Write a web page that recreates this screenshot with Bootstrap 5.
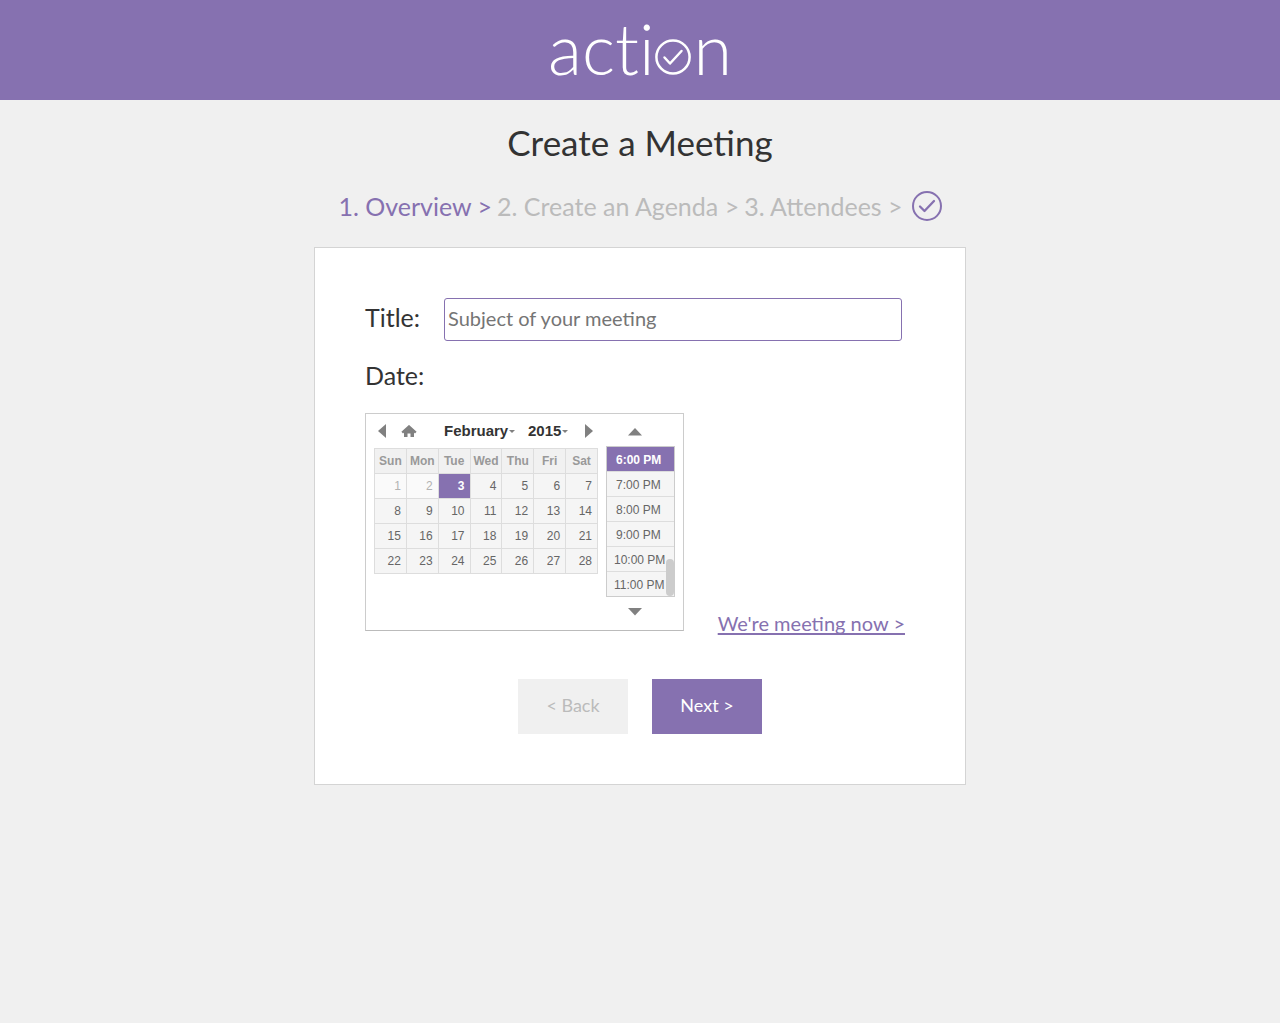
<!DOCTYPE html>
<html lang="en">
<head>
<meta charset="utf-8">
<meta name="viewport" content="width=device-width, initial-scale=1">
<title>Action - Create a Meeting</title>
<link href="https://cdn.jsdelivr.net/npm/bootstrap@5.3.0/dist/css/bootstrap.min.css" rel="stylesheet">
<style>
:root { --brand: #8671b0; --muted: #bbb; --line: #ddd; }
body { background: #f0f0f0; color: #333; font-family: Lato, sans-serif; font-size: 20px; line-height: 28px; }
button, input, select { font-family: inherit; }
.masthead { background: var(--brand); height: 100px; padding-bottom: 4px; }
.logo { color: #fff; font-size: 70px; font-weight: 300; line-height: 84px; font-variant-ligatures: none; }
.o-mark { margin: 18px 2px 0 1px; }
.page-title { font-size: 35px; line-height: 44px; font-weight: 400; margin: 20px 0 26px; }
.steps { font-size: 25px; line-height: 32px; gap: 5px; margin-bottom: 25px; }
.steps a { color: var(--muted); text-decoration: none; }
.steps a.current { color: var(--brand); }
.panel { max-width: 652px; background: #fff; border: 1px solid #d4d4d4; padding: 50px; }
.field-name { font-size: 25px; line-height: 32px; }
.title-row { gap: 24px; padding-right: 13px; }
.title-row label { padding-bottom: 6px; }
.title-input { height: 43px; border: 1px solid var(--brand); border-radius: 3px; padding: 0 3px 3px; font-size: 20px; }
.title-input::placeholder { color: #757575; opacity: 1; }
.date-name { margin: 18px 0 22px; }
.picker { border: 1px solid #ccc; border-bottom-color: #bbb; width: 319px; height: 218px; padding: 0 8px; margin-bottom: 6px; font-family: "Liberation Sans", Arial, sans-serif; font-size: 12px; line-height: 24px; gap: 8px; }
.month-side { width: 224px; }
.month-bar { height: 34px; padding: 0 4px; }
.plain { border: 0; padding: 0; background: none; color: inherit; }
.pick-select { border: 0; padding: 0; background: none; appearance: none; font-size: 15px; font-weight: 700; color: #333; height: 24px; }
.home-btn { margin: 0 27px 0 15px; }
.month-select { width: 65px; }
.year-select { width: 34px; margin-left: 13px; }
.next-month { margin-left: 17px; }
.days { width: 224px; table-layout: fixed; border-collapse: collapse; }
.days th, .days td { border: 1px solid var(--line); height: 25px; padding: 0; }
.days th { background: #f1f1f1; color: #999; font-weight: 700; text-align: center; }
.days td { background: #f5f5f5; color: #666; }
.days td.past { color: #b2b2b2; background: #fafafa; }
.days td.chosen { background: var(--brand); color: #fff; font-weight: 700; }
.days button { width: 100%; text-align: right; padding-right: 5px; font-weight: inherit; display: block; }
.time-side { width: 69px; }
.times { border: 1px solid #ccc; width: 69px; height: 151px; overflow: hidden; }
.times button { height: 25px; width: 100%; display: block; border-bottom: 1px solid var(--line); background: #f5f5f5; color: #666; white-space: nowrap; text-align: left; padding: 1px 0 0 9px; }
.times button.wide { padding-left: 7px; }
.times button.chosen { background: var(--brand); color: #fff; font-weight: 700; }
.thumb { right: 0; bottom: 0; width: 8px; height: 37px; border-radius: 4px; background: #ccc; }
.time-arrow { width: 58px; line-height: 0; }
.earlier { padding: 14px 0 10px; }
.later { padding-top: 11px; }
.now-link { color: var(--brand); margin-right: 10px; text-decoration: underline; text-decoration-thickness: 2px; text-decoration-skip-ink: none; text-underline-offset: 2px; }
.now-link:hover, .steps a:hover { color: #5d4a86; }
.actions { gap: 24px; margin-top: 42px; }
.action-btn { width: 110px; height: 55px; border: 0; border-radius: 0; padding: 0 0 4px; font-size: 18px; }
.back-btn { background: #f0f0f0; color: var(--muted); }
.next-btn, .next-btn:hover { background: var(--brand); color: #fff; }
</style>
</head>
<body>
<header class="masthead d-flex justify-content-center align-items-center">
  <div class="logo d-flex align-items-center">
    <span>acti</span><svg width="36" height="36" viewBox="0 0 36 36" fill="none" stroke="#fff" role="img" aria-label="o" class="o-mark"><circle cx="18" cy="18" r="16.6" stroke-width="2.5"/><path d="M9.500 18.500l5.500 6L26.500 12" stroke-width="2.5" stroke-linecap="round" stroke-linejoin="round"/></svg><span>n</span>
  </div>
</header>
<main class="container-fluid px-3">
  <h1 class="page-title text-center">Create a Meeting</h1>
  <nav class="steps d-flex flex-wrap justify-content-center align-items-center" aria-label="Steps">
    <a class="current" href="#overview" aria-current="step">1. Overview &gt;</a>
    <a href="#agenda">2. Create an Agenda &gt;</a>
    <a href="#attendees">3. Attendees &gt;</a>
    <svg class="ms-1" width="30" height="30" viewBox="0 0 30 30" fill="none" stroke="#8671b0" stroke-width="2"><circle cx="15" cy="15" r="14"/><path d="M8 15.500l4.500 4.500L22 10" stroke-width="2.3" stroke-linecap="round" stroke-linejoin="round"/></svg>
  </nav>
  <form class="panel mx-auto">
    <div class="title-row d-flex align-items-center">
      <label class="field-name" for="title">Title:</label>
      <input class="title-input flex-grow-1 w-100" id="title" type="text" placeholder="Subject of your meeting">
    </div>
    <div class="field-name date-name" id="date-name">Date:</div>
    <div class="d-flex flex-wrap justify-content-between align-items-end">
      <div class="picker d-flex" role="group" aria-labelledby="date-name">
        <div class="month-side">
          <div class="month-bar d-flex align-items-center">
            <button class="plain prev-btn d-flex" type="button" aria-label="Previous month"><svg width="8" height="14"><path d="M8 0v14L0 7z" fill="#808080"/></svg></button>
            <button class="plain home-btn d-flex" type="button" aria-label="Today"><svg width="16" height="12" viewBox="0 0 16 12"><path d="M1.200 7.600L8 1.500l6.800 6.100" fill="none" stroke="#808080" stroke-width="2.400"/><path d="M3 7l5-4.500L13 7v5H9.500V8.500h-3V12H3z" fill="#808080"/></svg></button>
            <select class="pick-select month-select" aria-label="Month"><option>January</option><option selected>February</option><option>March</option><option>April</option></select>
            <svg width="6" height="3"><path d="M0 0h6L3 3z" fill="#808080"/></svg>
            <select class="pick-select year-select" aria-label="Year"><option>2014</option><option selected>2015</option><option>2016</option></select>
            <svg width="6" height="3"><path d="M0 0h6L3 3z" fill="#808080"/></svg>
            <button class="plain next-month d-flex" type="button" aria-label="Next month"><svg width="8" height="14"><path d="M0 0v14l8-7z" fill="#808080"/></svg></button>
          </div>
          <table class="days">
            <thead><tr><th>Sun</th><th>Mon</th><th>Tue</th><th>Wed</th><th>Thu</th><th>Fri</th><th>Sat</th></tr></thead>
            <tbody>
              <tr><td class="past"><button class="plain" type="button">1</button></td><td class="past"><button class="plain" type="button">2</button></td><td class="chosen"><button class="plain" type="button">3</button></td><td><button class="plain" type="button">4</button></td><td><button class="plain" type="button">5</button></td><td><button class="plain" type="button">6</button></td><td><button class="plain" type="button">7</button></td></tr>
              <tr><td><button class="plain" type="button">8</button></td><td><button class="plain" type="button">9</button></td><td><button class="plain" type="button">10</button></td><td><button class="plain" type="button">11</button></td><td><button class="plain" type="button">12</button></td><td><button class="plain" type="button">13</button></td><td><button class="plain" type="button">14</button></td></tr>
              <tr><td><button class="plain" type="button">15</button></td><td><button class="plain" type="button">16</button></td><td><button class="plain" type="button">17</button></td><td><button class="plain" type="button">18</button></td><td><button class="plain" type="button">19</button></td><td><button class="plain" type="button">20</button></td><td><button class="plain" type="button">21</button></td></tr>
              <tr><td><button class="plain" type="button">22</button></td><td><button class="plain" type="button">23</button></td><td><button class="plain" type="button">24</button></td><td><button class="plain" type="button">25</button></td><td><button class="plain" type="button">26</button></td><td><button class="plain" type="button">27</button></td><td><button class="plain" type="button">28</button></td></tr>
            </tbody>
          </table>
        </div>
        <div class="time-side">
          <button class="plain time-arrow earlier d-flex justify-content-center" type="button" aria-label="Earlier"><svg width="14" height="8"><path d="M0 7.500h14L7 0z" fill="#808080"/></svg></button>
          <div class="times position-relative">
            <button class="plain chosen" type="button">6:00 PM</button>
            <button class="plain" type="button">7:00 PM</button>
            <button class="plain" type="button">8:00 PM</button>
            <button class="plain" type="button">9:00 PM</button>
            <button class="plain wide" type="button">10:00 PM</button>
            <button class="plain wide" type="button">11:00 PM</button>
            <div class="thumb position-absolute"></div>
          </div>
          <button class="plain time-arrow later d-flex justify-content-center" type="button" aria-label="Later"><svg width="14" height="8"><path d="M0 0h14L7 7.500z" fill="#808080"/></svg></button>
        </div>
      </div>
      <a class="now-link" href="#now">We're meeting now &gt;</a>
    </div>
    <div class="actions d-flex justify-content-center">
      <button class="action-btn back-btn" type="button">&lt; Back</button>
      <button class="action-btn next-btn" type="submit">Next &gt;</button>
    </div>
  </form>
</main>
<script src="https://cdn.jsdelivr.net/npm/bootstrap@5.3.0/dist/js/bootstrap.bundle.min.js"></script>
</body>
</html>
